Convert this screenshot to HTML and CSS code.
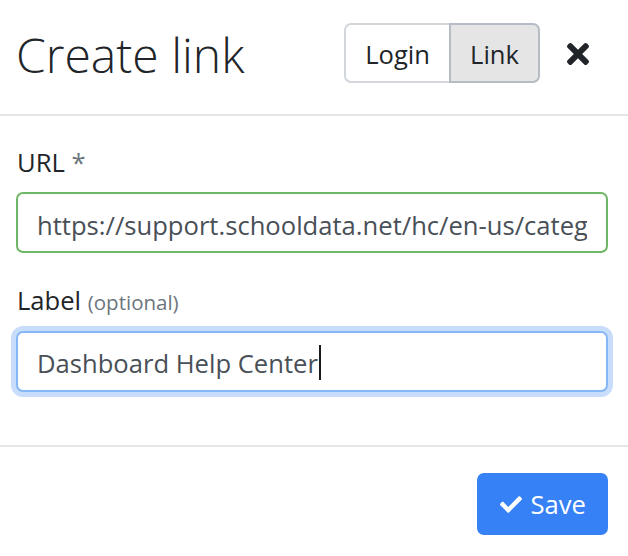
FILE: index.html
```html
<!DOCTYPE html>
<html lang="en">
<head>
<meta charset="utf-8">
<title>Create link</title>
<link rel="stylesheet" href="styles.css">
</head>
<body>
<div class="modal">
  <div class="modal-header">
    <h2 class="modal-title">Create link</h2>
    <div class="btn-group">
      <button class="btn-toggle" type="button">Login</button>
      <button class="btn-toggle active" type="button">Link</button>
    </div>
    <button class="close" type="button" aria-label="Close">
      <svg viewBox="0 80 352 352" width="22" height="22"><path d="M242.72 256l100.07-100.07c12.28-12.28 12.28-32.19 0-44.48l-22.24-22.240c-12.28-12.28-32.19-12.28-44.48 0L176 189.28 75.93 89.21c-12.28-12.28-32.19-12.28-44.48 0L9.21 111.45c-12.28 12.28-12.28 32.19 0 44.48L109.28 256 9.21 356.07c-12.28 12.28-12.28 32.19 0 44.48l22.24 22.24c12.28 12.28 32.2 12.28 44.48 0L176 322.72l100.07 100.07c12.28 12.28 32.2 12.28 44.48 0l22.24-22.24c12.28-12.28 12.28-32.19 0-44.48L242.72 256z" fill="#212529"/></svg>
    </button>
  </div>
  <div class="modal-body">
    <div class="form-group">
      <label class="form-label" for="url">URL <span class="req">*</span></label>
      <input id="url" class="form-control is-valid" type="text" value="https://support.schooldata.net/hc/en-us/categories/360002019634-Dashboard">
    </div>
    <div class="form-group">
      <label class="form-label">Label <small class="muted">(optional)</small></label>
      <div class="form-control focused"><span class="value">Dashboard Help Center</span><span class="caret"></span></div>
    </div>
  </div>
  <div class="modal-footer">
    <button class="btn-primary" type="button">
      <svg viewBox="0 65 512 382" width="22" height="17"><path d="M173.898 439.404l-166.4-166.4c-9.997-9.997-9.997-26.206 0-36.204l36.203-36.204c9.997-9.998 26.207-9.998 36.204 0L192 312.69 432.095 72.596c9.997-9.997 26.207-9.997 36.204 0l36.203 36.204c9.997 9.997 9.997 26.206 0 36.204l-294.4 294.401c-9.998 9.997-26.207 9.997-36.204-.001z" fill="#fff"/></svg>
      <span>Save</span>
    </button>
  </div>
</div>
</body>
</html>
```

FILE: styles.css
```css
* { box-sizing: border-box; }

html, body {
  margin: 0;
  padding: 0;
  background: #fff;
}

body {
  font-family: "Open Sans", "Noto Sans", sans-serif;
  font-size: 25.6px;
  line-height: 1.5;
  color: #212529;
}

.modal {
  width: 628px;
  height: 556px;
}

.modal-header {
  display: flex;
  align-items: center;
  height: 116px;
  padding: 0 39px 6px 16px;
  border-bottom: 2px solid #e4e6e9;
}

.modal-title {
  margin: 0;
  padding-top: 2px;
  font-size: 48px;
  font-weight: 300;
  line-height: 1.2;
  color: #212529;
  flex: 1;
}

.btn-group {
  display: flex;
  margin-top: -2px;
}

.btn-toggle {
  font-family: inherit;
  font-size: 25.6px;
  line-height: 1.5;
  color: #212529;
  background: #fff;
  border: 2px solid #d3d7db;
  padding: 11px 19px 7px;
  height: 60px;
  margin: 0;
  cursor: pointer;
}

.btn-toggle:first-child {
  border-radius: 7px 0 0 7px;
  border-right: none;
}

.btn-toggle.active {
  background: #e5e5e6;
  border-color: #b5bcc4;
  border-radius: 0 7px 7px 0;
}

.close {
  display: flex;
  align-items: center;
  background: none;
  border: none;
  padding: 0;
  margin-left: 27px;
  cursor: pointer;
}

.modal-body {
  padding: 25px 20px 27px 16px;
}

.form-group {
  margin-bottom: 25.6px;
}

.form-label {
  display: block;
  padding-top: 3px;
  margin-bottom: 9.8px;
  line-height: 38.4px;
  margin-left: 1px;
}

.req {
  color: #6c757d;
}

.muted {
  font-size: 20.5px;
  color: #6c757d;
}

.form-control {
  display: block;
  width: 100%;
  height: 61px;
  padding: 12px 19px 6px;
  font-family: inherit;
  font-size: 25.6px;
  line-height: 1.5;
  color: #495057;
  background: #fff;
  border: 2px solid #ced4da;
  border-radius: 7px;
  outline: none;
}

.form-control.is-valid {
  border-color: #6db767;
}

.form-control.focused {
  border-color: #86b7f7;
  box-shadow: 0 0 0 5px #c8ddfb;
  display: flex;
  align-items: center;
}

.caret {
  display: inline-block;
  width: 2px;
  height: 35px;
  background: #1b1b1b;
  margin-left: 1px;
  margin-top: -4px;
}

.modal-footer {
  display: flex;
  justify-content: flex-end;
  padding: 26px 20px 0 16px;
  border-top: 2px solid #e4e6e9;
}

.btn-primary {
  display: flex;
  align-items: center;
  gap: 9px;
  height: 62px;
  padding: 2px 22px 0 23px;
  font-family: inherit;
  font-size: 25.6px;
  color: #fff;
  background: #3581f5;
  border: none;
  border-radius: 7px;
  cursor: pointer;
}
```
